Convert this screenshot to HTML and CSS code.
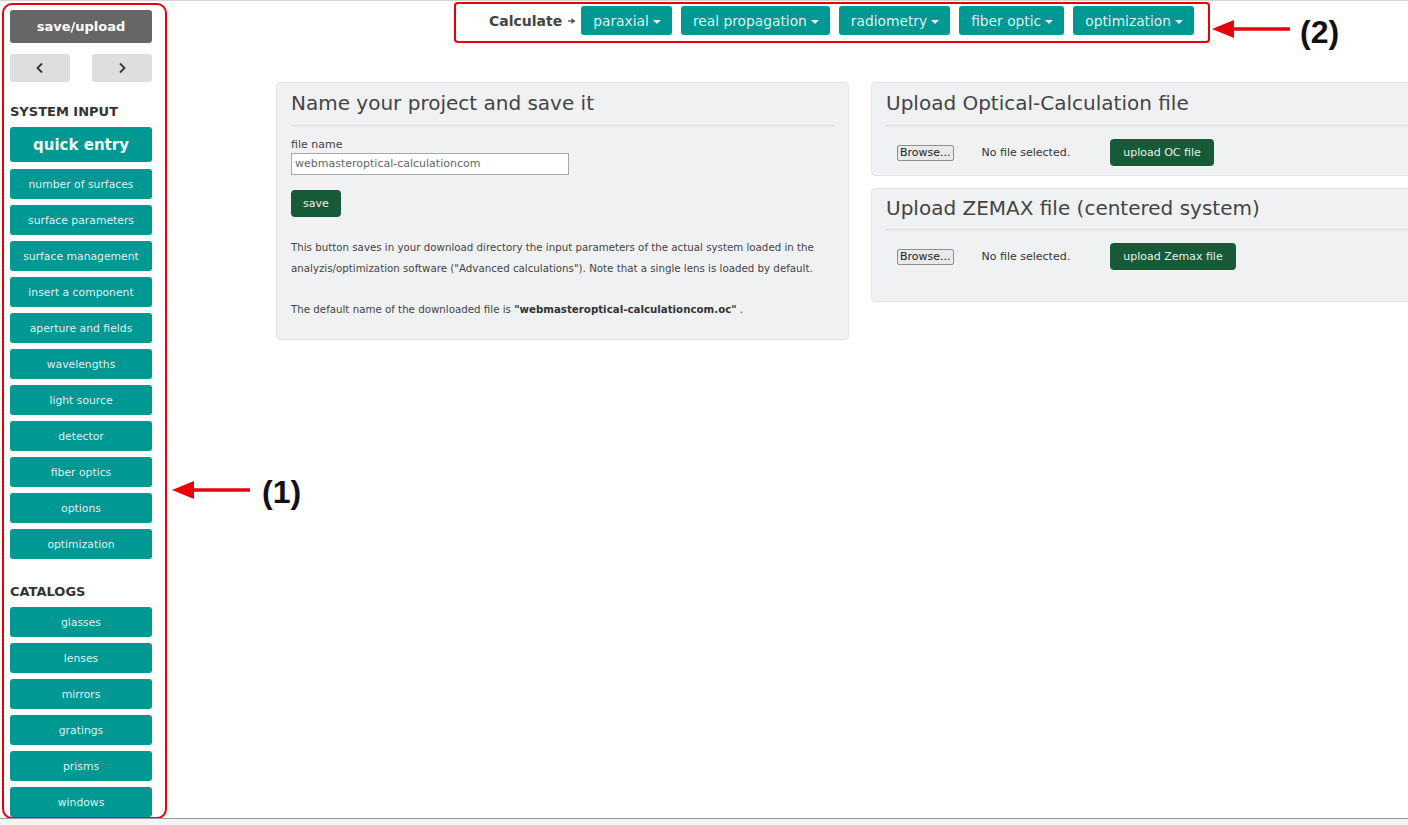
FILE: index.html
```html
<!DOCTYPE html>
<html lang="en">
<head>
	<meta charset="UTF-8">
	<title>Optical calculation - save/upload</title>
	<link rel="stylesheet" href="styles.css">
</head>
<body>
	<div class="frame">
		<div class="sidebar">
			<a class="btn-dark">save/upload</a>
			<div class="nav-row">
				<a class="btn-gray"><svg width="10" height="12" viewBox="0 0 10 12"><path d="M7 1.5 2.5 6 7 10.5" fill="none" stroke="#333" stroke-width="1.8"/></svg></a>
				<a class="btn-gray"><svg width="10" height="12" viewBox="0 0 10 12"><path d="M3 1.5 7.5 6 3 10.5" fill="none" stroke="#333" stroke-width="1.8"/></svg></a>
			</div>
			<h4 class="side-title">SYSTEM INPUT</h4>
			<a class="btn-teal big">quick entry</a>
			<a class="btn-teal">number of surfaces</a>
			<a class="btn-teal">surface parameters</a>
			<a class="btn-teal">surface management</a>
			<a class="btn-teal">insert a component</a>
			<a class="btn-teal">aperture and fields</a>
			<a class="btn-teal">wavelengths</a>
			<a class="btn-teal">light source</a>
			<a class="btn-teal">detector</a>
			<a class="btn-teal">fiber optics</a>
			<a class="btn-teal">options</a>
			<a class="btn-teal">optimization</a>
			<h4 class="side-title catalogs">CATALOGS</h4>
			<a class="btn-teal">glasses</a>
			<a class="btn-teal">lenses</a>
			<a class="btn-teal">mirrors</a>
			<a class="btn-teal">gratings</a>
			<a class="btn-teal">prisms</a>
			<a class="btn-teal">windows</a>
		</div>

		<div class="main">
			<div class="topnav">
				<span class="calc">Calculate <svg class="arr" width="8" height="8" viewBox="0 0 8 8"><path d="M0 4H5" stroke="#555" stroke-width="1.4"/><path d="M3.5 1 7.5 4 3.5 7Z" fill="#555"/></svg></span>
				<a class="btn-menu">paraxial <i class="caret"></i></a>
				<a class="btn-menu">real propagation <i class="caret"></i></a>
				<a class="btn-menu">radiometry <i class="caret"></i></a>
				<a class="btn-menu">fiber optic <i class="caret"></i></a>
				<a class="btn-menu">optimization <i class="caret"></i></a>
			</div>

			<div class="panels">
				<div class="panel">
					<h3>Name your project and save it</h3>
					<label class="lbl">file name</label>
					<div class="input">webmasteroptical-calculationcom</div>
					<a class="btn-green save">save</a>
					<p class="txt">This button saves in your download directory the input parameters of the actual system loaded in the analyzis/optimization software ("Advanced calculations"). Note that a single lens is loaded by default.</p>
					<p class="txt">The default name of the downloaded file is <b>"webmasteroptical-calculationcom.oc"</b> .</p>
				</div>
				<div class="col">
					<div class="panel">
						<h3>Upload Optical-Calculation file</h3>
						<div class="upload-row">
							<span class="browse">Browse...</span>
							<span class="nofile">No file selected.</span>
							<a class="btn-green">upload OC file</a>
						</div>
					</div>
					<div class="panel tall">
						<h3>Upload ZEMAX file (centered system)</h3>
						<div class="upload-row">
							<span class="browse">Browse...</span>
							<span class="nofile">No file selected.</span>
							<a class="btn-green">upload Zemax file</a>
						</div>
					</div>
				</div>
			</div>
		</div>

		<!-- annotations -->
		<div class="mark mark-side"></div>
		<div class="mark mark-top"></div>
		<svg class="arrow arrow-1" width="84" height="24" viewBox="0 0 84 24"><path d="M22 12H80" stroke="#e8000b" stroke-width="3.5"/><path d="M2 12 24 3V21Z" fill="#e8000b"/></svg>
		<span class="tag tag-1">(1)</span>
		<svg class="arrow arrow-2" width="84" height="24" viewBox="0 0 84 24"><path d="M22 12H80" stroke="#e8000b" stroke-width="3.5"/><path d="M2 12 24 3V21Z" fill="#e8000b"/></svg>
		<span class="tag tag-2">(2)</span>
	</div>
</body>
</html>
```

FILE: styles.css
```css
*{margin:0;padding:0;box-sizing:border-box}
html,body{background:#f4f4f4;overflow:hidden}
body{
	font-family:"DejaVu Sans", "Noto Sans", sans-serif;
	color:#333;
}
.frame{
	position:relative;
	height:819px;
	background:#fff;
	border-top:1px solid #d4d4d4;
	border-bottom:1px solid #9a9a9a;
	box-shadow:0 2px 3px rgba(0,0,0,.25);
	display:flex;
	overflow:hidden;
}
a{cursor:pointer;text-decoration:none}

/* sidebar */
.sidebar{
	width:170px;
	flex:none;
	padding:9px 0 0 10px;
	display:flex;
	flex-direction:column;
}
.sidebar > *{flex:none}
.sidebar a{width:142px}
.btn-dark{
	height:33px;
	background:#666;
	color:#fff;
	border-radius:3px;
	font-weight:bold;
	font-size:13px;
	display:flex;align-items:center;justify-content:center;
}
.nav-row{
	width:142px;
	display:flex;
	justify-content:space-between;
	margin-top:11px;
}
.nav-row .btn-gray{
	width:60px;
	height:28px;
	background:#dedede;
	border-radius:3px;
	display:flex;align-items:center;justify-content:center;
}
.side-title{
	font-size:13px;
	font-weight:bold;
	color:#333;
	margin:22px 0 7px;
	line-height:16px;
}
.side-title.catalogs{margin:19px 0 7px}
.btn-teal{
	height:30px;
	margin-bottom:6px;
	background:#009893;
	color:#dff3f2;
	border-radius:3px;
	font-size:10.8px;
	display:flex;align-items:center;justify-content:center;
}
.btn-teal.big{
	height:35px;
	margin-bottom:7px;
	font-size:15px;
	font-weight:bold;
	color:#f2fbfb;
}

/* main area */
.main{flex:1;min-width:0}
.topnav{
	display:flex;
	align-items:center;
	height:29px;
	margin-top:5px;
	padding-left:319px;
	gap:9px;
}
.calc{
	font-size:14px;
	font-weight:bold;
	color:#444;
	display:flex;align-items:center;gap:6px;
	margin-right:-4px;
}
.btn-menu{
	height:29px;
	padding:0 11px 0 12px;
	background:#009893;
	color:#dff3f2;
	border-radius:3px;
	font-size:13.8px;
	display:flex;align-items:center;gap:4px;
}
.caret{
	display:inline-block;
	border-top:4px solid #dff3f2;
	border-left:4px solid transparent;
	border-right:4px solid transparent;
	margin-top:2px;
}

.panels{
	display:flex;
	gap:22px;
	margin:47px 0 0 106px;
	align-items:flex-start;
}
.col{display:flex;flex-direction:column;gap:12px}
.panel{
	width:578px;
	flex:none;
	background:#f0f1f3;
	border:1px solid #e2e3e5;
	border-radius:4px;
	padding:7px 14px 9px;
}
.panels > .panel{width:573px;height:258px;padding-top:7px}
.panel h3{
	font-size:20px;
	font-weight:normal;
	color:#444;
	line-height:26px;
	padding-bottom:9px;
	border-bottom:1px solid #dcdcdc;
	margin-bottom:13px;
}
.panels > .panel h3{padding-bottom:9px;margin-bottom:12px}
.panel.tall h3{padding-bottom:8px;margin-bottom:13px}
.lbl{display:block;font-size:11px;color:#444;line-height:13px}
.input{
	width:278px;
	height:22px;
	margin-top:2px;
	background:#fff;
	border:1px solid #a8a8a8;
	font-size:11px;
	color:#666;
	padding:3px 3px;
	line-height:14px;
}
.btn-green{
	display:inline-flex;align-items:center;
	height:27px;
	padding:0 12px;
	background:#165a38;
	color:#e8f2ec;
	border-radius:4px;
	font-size:11px;
}
.save{margin-top:15px}
.txt{
	font-size:10.25px;
	line-height:21px;
	color:#444;
	margin-top:20px;
}
.txt + .txt{margin-top:20px}
.txt b{color:#333}

.upload-row{
	display:flex;
	align-items:center;
	padding-left:11px;
}
.upload-row .btn-green{padding:0 13px}
.browse{
	font-size:11px;
	color:#222;
	background:#e9e9e9;
	border:1px solid #8f8f8f;
	border-radius:2px;
	padding:0 2px;
	line-height:14px;
}
.nofile{font-size:11px;color:#333;margin:0 40px 0 28px}
.panel.tall{height:114px;padding-top:6px}

/* annotations */
.mark{
	position:absolute;
	border:2.5px solid #e8000b;
	border-radius:10px;
}
.mark-side{left:2px;top:2px;width:165px;height:816px}
.mark-top{left:454px;top:1px;width:756px;height:41px;border-radius:4px}
.arrow{position:absolute}
.arrow-1{left:170px;top:477px}
.arrow-2{left:1210px;top:16px}
.tag{
	position:absolute;
	font-family:"Liberation Sans", Arial, sans-serif;
	font-weight:bold;
	font-size:32px;
	line-height:36px;
	color:#111;
}
.tag-1{left:262px;top:473px}
.tag-2{left:1300px;top:13px}
```
